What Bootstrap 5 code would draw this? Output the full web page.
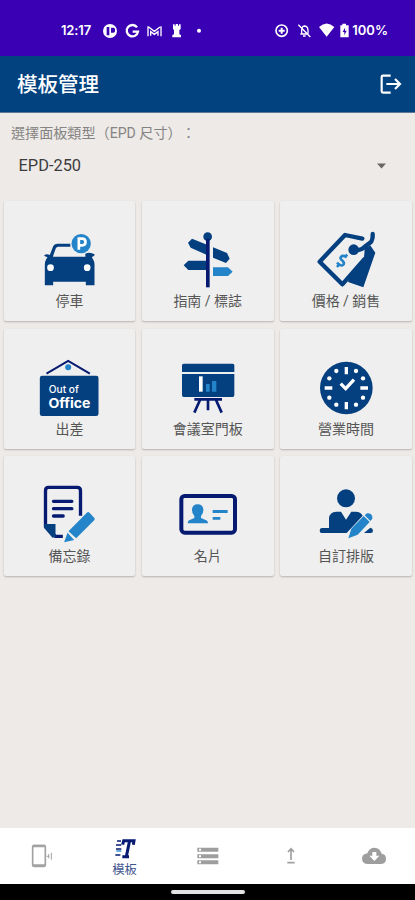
<!DOCTYPE html>
<html lang="zh-Hant">
<head>
<meta charset="utf-8">
<meta name="viewport" content="width=device-width, initial-scale=1">
<title>模板管理</title>
<link href="https://cdn.jsdelivr.net/npm/bootstrap@5.3.0/dist/css/bootstrap.min.css" rel="stylesheet">
<style>
:root{--navy:#043f80;--ink:#061a72;--sky:#2484c9}
body{font-family:Roboto,"Noto Sans CJK TC",sans-serif;background:#edeae8}
svg{display:block;flex:none}
.status-strip{height:56px;background:#3a00b3;padding:5px 27px 0 61px;font:600 13px/1 Inter,sans-serif}
.clock-text{width:42px;letter-spacing:-.15px}
.app-bar{height:57px;background:#02427f;padding:0 13px 0 17px;border-bottom:1px solid #5c7896}
.app-bar h1{font-size:20.5px;font-weight:500;line-height:28px;padding-top:2px}
.type-label{font-size:14.1px;line-height:20px;color:#868482;padding:10px 11px 0;text-spacing-trim:space-all;font-kerning:none}
.type-select{font-size:16.4px;line-height:24px;color:#3d3c3c;padding:11px 28px 0 18.5px}
.tile-grid{display:grid;grid-template-columns:repeat(3,1fr);grid-auto-rows:120px;gap:7.5px 6.3px;padding:23px 3px 0 3.5px}
.tile{background:#efefef;border:0;border-radius:2px;box-shadow:0 1px 2px rgba(0,0,0,.24);padding-top:29px;color:#555;font-size:14px;line-height:22px}
.tile svg,.bottom-tabs svg{overflow:visible}
.bottom-tabs{height:56px;background:#fff}
.tab-name{font-size:12.3px;line-height:14px;color:#3e5490;margin-top:1px}
.gesture-bar{height:16px}
.gesture-pill{width:74px;height:4px;background:#e4e4e4}
</style>
</head>
<body>
<div class="d-flex flex-column vh-100 overflow-hidden">
  <div class="status-strip d-flex align-items-center text-white">
    <span class="clock-text">12:17</span>
    <svg width="102" height="18" viewBox="309 63 306 54" fill="#fff">
      <circle cx="330" cy="90" r="21"/><path d="M320 78h8v25h-8zM333 80h8q4 0 4 5v6q0 4-5 4h-7z" fill="#3a00b3"/>
      <path d="M411 79a17 17 0 1 0 3 13h-16" fill="none" stroke="#fff" stroke-width="7"/>
      <path d="M444 76v30M483 76v30M446 78l17 13 17-13M452 104V92l11 8 11-8v12" fill="none" stroke="#fff" stroke-width="4"/>
      <path d="M519 70h5v4h3v-5h7v5h3v-4h5v14l-4 3v13l5 2v7h-26v-7l5-2V87l-3-3z"/>
      <circle cx="597" cy="89" r="6"/>
    </svg>
    <svg class="ms-auto" width="78" height="18" viewBox="206 63 234 54" fill="none" stroke="#fff" stroke-width="5">
      <circle cx="229" cy="89" r="17"/><path d="M220 89h18M229 80v18" stroke-width="6"/>
      <path d="M285 99h23M289 98V88q0-12 8-13 10 0 11 12v11M279 71l36 37M293 105h8" stroke-width="4"/>
      <path d="M341 78q23-21 46 0l-23 29z" fill="#fff" stroke="none"/>
      <path d="M411 68h11v5h8v36h-25V73h6z" fill="#fff" stroke="none"/><path d="M419 80l-7 13h5v10l7-14h-5z" fill="#3a00b3" stroke="none"/>
    </svg>
    <span>100%</span>
  </div>

  <header class="app-bar d-flex align-items-center justify-content-between text-white">
    <h1 class="m-0">模板管理</h1>
    <svg width="22" height="22" viewBox="525 220 66 66" fill="none" stroke="#fff" stroke-width="6.5"><path d="M557 228h-23q-4 0-4 4v43q0 4 4 4h23M544 253h40M570 238l15 15-15 15"/></svg>
  </header>

  <main class="flex-grow-1">
    <div class="type-label">選擇面板類型（EPD 尺寸）：</div>
    <div class="type-select d-flex align-items-center justify-content-between">
      <span>EPD-250</span>
      <svg width="11" height="6" viewBox="0 0 11 6" fill="#696766"><path d="M1 .5h9L5.500 5.500z"/></svg>
    </div>
    <div class="tile-grid">
      <button class="tile d-flex flex-column align-items-center">
        <svg width="70" height="60" viewBox="103.500 105 210 180" fill="var(--navy)">
          <path d="M134 181q8-6 17-1l10-26q3-8 12-8h40v9h-37q-5 0-7 5l-9 25h98l-1-9q14-6 28 2 2 5-8 8l5 10q3 5 3 12v63h-26v-11h-98v11h-25v-63q0-8 3-13l5-9q-10-1-10-5z"/>
          <circle cx="153" cy="218" r="10" fill="#fff"/><circle cx="263" cy="218" r="10" fill="#fff"/>
          <circle cx="245" cy="146" r="32" fill="#efefef"/><circle cx="245" cy="146" r="29" fill="var(--sky)"/>
          <path d="M238 164v-33h10q10 0 10 10t-10 10h-10" fill="none" stroke="#fff" stroke-width="8"/>
        </svg>停車
      </button>
      <button class="tile d-flex flex-column align-items-center">
        <svg width="70" height="60" viewBox="105 105 210 180" fill="var(--navy)">
          <path d="M150 143l12-12 45 18v31l-49-22zM225 157l42 17 8 17-11 13-39-16zM137 211l14-14h56v28h-56z"/>
          <path d="M225 217h45l14 13-14 13h-45z" fill="var(--sky)"/>
          <circle cx="209" cy="125" r="13"/><path d="M204 132h11v145h-11z" fill="var(--ink)"/>
        </svg>指南 / 標誌
      </button>
      <button class="tile d-flex flex-column align-items-center">
        <svg width="70" height="60" viewBox="108 105 210 180" stroke-linecap="round" stroke-linejoin="round">
          <path d="M285 150l16 23-36 104-46-16 12-40 44-50z" fill="var(--navy)"/>
          <path d="M210 120l-76 80 68 68 67-76v-55z" fill="#efefef"/>
          <path d="M262 131l-52-11-76 80 68 68 67-76" fill="none" stroke="var(--navy)" stroke-width="13"/>
          <path d="M269 158l16-6 10 22-14 25-14-5z" fill="var(--navy)"/>
          <circle cx="236" cy="164" r="16" fill="var(--navy)"/>
          <path d="M238 165q20 2 29-8l20-15q7-8 6-25" fill="none" stroke="var(--navy)" stroke-width="13"/>
          <path d="M215 187q-13-8-18 0-2 5 6 11 7 7 1 12-7 5-18-7M211 184l6-5M186 216l6-7" fill="none" stroke="var(--sky)" stroke-width="8" stroke-linecap="butt"/>
        </svg>價格 / 銷售
      </button>
      <button class="tile d-flex flex-column align-items-center">
        <svg width="70" height="60" viewBox="103.500 96 210 180">
          <path d="M141 143l65-38 65 38" fill="none" stroke="var(--ink)" stroke-width="6"/>
          <circle cx="206" cy="124" r="9" fill="var(--sky)"/><rect x="121" y="149" width="176" height="121" rx="7" fill="var(--navy)"/>
          <g fill="#fff" font-family="Inter,sans-serif"><text x="148" y="200" font-size="31" font-weight="500" textLength="90" lengthAdjust="spacingAndGlyphs">Out of</text><text x="147" y="246" font-size="39" font-weight="700" textLength="126" lengthAdjust="spacingAndGlyphs">Office</text></g>
        </svg>出差
      </button>
      <button class="tile d-flex flex-column align-items-center">
        <svg width="70" height="60" viewBox="105 96 210 180">
          <path d="M132 138v-20q0-5 5-5h147q5 0 5 5v20zM132 144h157v63q0 6-5 6H137q-5 0-5-6z" fill="var(--navy)"/>
          <path d="M183 151h11v46h-11z" fill="#fff"/><path d="M204 174h11v23h-11zM222 165h13v32h-13z" fill="var(--sky)"/>
          <path d="M169 220h83M186 222l-17 38M210 222v31M234 222l17 38" stroke="var(--ink)" stroke-width="8"/>
        </svg>會議室門板
      </button>
      <button class="tile d-flex flex-column align-items-center">
        <svg width="70" height="60" viewBox="108 96 210 180">
          <circle cx="214" cy="186" r="79" fill="var(--navy)"/>
          <path d="M214 123v22M214 228v22M149 186h23M256 186h23" stroke="#fff" stroke-width="10"/>
          <g fill="#fff"><circle cx="184" cy="135" r="6.500"/><circle cx="243" cy="135" r="6.500"/><circle cx="163" cy="157" r="6.500"/><circle cx="264" cy="157" r="6.500"/><circle cx="163" cy="215" r="6.500"/><circle cx="264" cy="215" r="6.500"/><circle cx="184" cy="236" r="6.500"/><circle cx="243" cy="236" r="6.500"/></g>
          <path d="M197 173l15 15 25-27" fill="none" stroke="#fff" stroke-width="10"/>
        </svg>營業時間
      </button>
      <button class="tile d-flex flex-column align-items-center">
        <svg width="70" height="60" viewBox="103.500 96 210 180">
          <path d="M243 188v-75q0-10-10-10h-86q-9 0-9 10v108l30 29h22" fill="none" stroke="var(--ink)" stroke-width="10"/>
          <path d="M134 213h34v39l-9 2-25-29z" fill="var(--navy)"/>
          <path d="M162 145h55M162 167h55M162 189h29" stroke="var(--ink)" stroke-width="10" stroke-linecap="round"/>
          <path d="M207 235l55-56q4-4 8 0l14 15q4 4 0 8l-54 54zM204 239l20 22-30 7z" fill="var(--sky)"/>
        </svg>備忘錄
      </button>
      <button class="tile d-flex flex-column align-items-center">
        <svg width="70" height="60" viewBox="105 96 210 180">
          <rect x="130" y="129" width="161" height="110" rx="10" fill="none" stroke="var(--ink)" stroke-width="12"/>
          <path d="M149 211q0-9 8-11l12-5v-6q-8-8-7-21 2-14 17-14t17 14q1 13-7 21v6l12 5q9 2 9 11zM224 171h45v9h-45zM224 192h23v8h-23z" fill="var(--sky)"/>
        </svg>名片
      </button>
      <button class="tile d-flex flex-column align-items-center">
        <svg width="70" height="60" viewBox="108 96 210 180" fill="var(--navy)">
          <circle cx="213" cy="136" r="27"/><path d="M162 225v-29q2-20 22-20h14l15 24 16-24h13q15 0 21 12l-48 52h-75q-6 0-6-7t6-8zM267 240l19-16q8 2 8 9t-7 7z"/>
          <path d="M220 256l9-29 37-38 18 18-36 38zM269 187l7-6q6-2 12 3 7 6 4 13l-6 7z" fill="var(--sky)"/>
        </svg>自訂排版
      </button>
    </div>
  </main>

  <nav class="bottom-tabs d-flex">
    <a class="col d-flex align-items-center justify-content-center" href="#"><svg width="22" height="24" viewBox="93 88 66 72" fill="none" stroke="#a2a2a2"><rect x="98" y="93" width="38" height="62" rx="4" stroke-width="5"/><path d="M98 94h38M98 152h38" stroke-width="7"/><path d="M140 125h8M146 118v13M154 114v21" stroke-width="3"/></svg></a>
    <a class="col d-flex flex-column align-items-center text-decoration-none pt-2" href="#"><svg width="22" height="26" viewBox="341 62 66 78" fill="none" stroke="var(--ink)"><path d="M367 88l3-12h31l-2 12M388 75l-10 49M366 124h20" stroke-width="9"/><path d="M350 77h12M347 89h16M347 101h16M345 119h15" stroke-width="5"/><path d="M348 107h15" stroke="#2484c9" stroke-width="4"/></svg><span class="tab-name">模板</span></a>
    <a class="col d-flex align-items-center justify-content-center" href="#"><svg width="22" height="18" viewBox="591 96 66 54" fill="#9e9e9e"><path d="M592 98h63v12h-63zM592 118h63v12h-63zM592 136h63v12h-63z"/><path d="M597 101h6v6h-6zM597 121h6v6h-6zM597 139h6v6h-6z" fill="#fff"/></svg></a>
    <a class="col d-flex align-items-center justify-content-center" href="#"><svg width="10" height="18" viewBox="857 97 30 54" fill="none" stroke="#a0a0a0" stroke-width="5"><path d="M872 136v-32M863 112l9-10 9 10M861 144h22"/></svg></a>
    <a class="col d-flex align-items-center justify-content-center" href="#"><svg width="24" height="18" viewBox="1085 96 72 54"><path d="M1103 147q-18-1-18-16 0-13 16-16 6-17 21-17 17 0 22 18 13 2 13 15 0 14-14 16z" fill="#9e9e9e"/><path d="M1116 111h12v11h9l-15 16-15-16h9z" fill="#fff"/></svg></a>
  </nav>
  <div class="gesture-bar bg-black d-flex align-items-center justify-content-center"><div class="gesture-pill rounded-pill"></div></div>
</div>
<script src="https://cdn.jsdelivr.net/npm/bootstrap@5.3.0/dist/js/bootstrap.bundle.min.js"></script>
</body>
</html>
